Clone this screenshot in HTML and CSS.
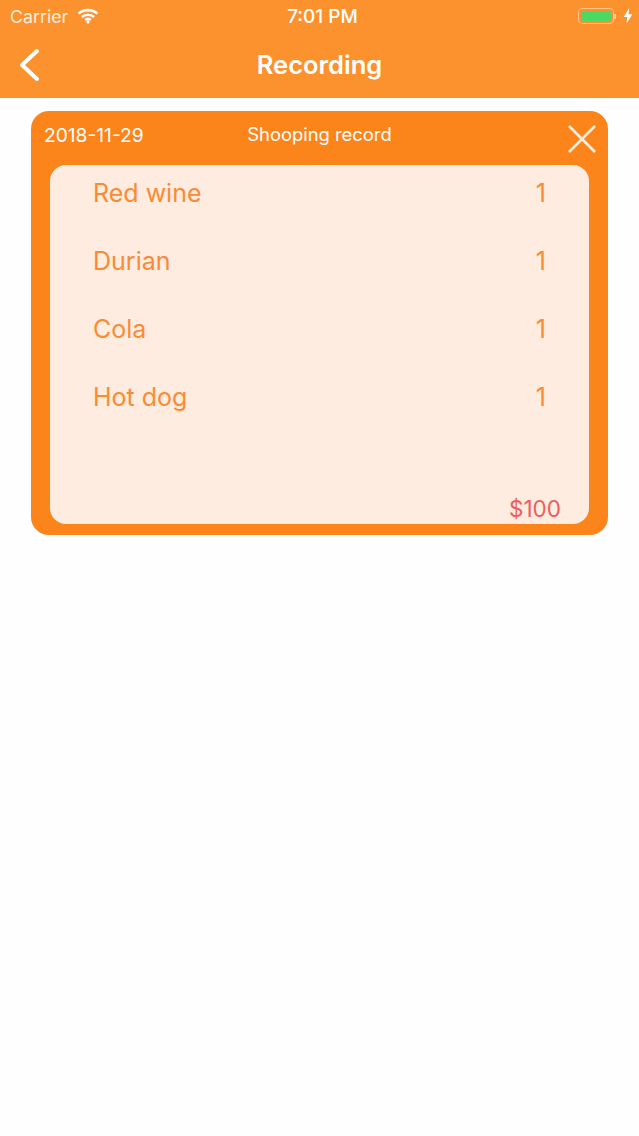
FILE: index.html
```html
<!DOCTYPE html>
<html lang="en">
<head>
    <meta charset="UTF-8">
    <meta name="viewport" content="width=device-width, initial-scale=1.0">
    <title>Recording</title>
    <link rel="stylesheet" href="styles.css">
</head>
<body>
    <header class="topbar">
        <div class="status-bar">
            <div class="status-left">
                <span>Carrier</span>
                <svg class="wifi" width="22" height="16" viewBox="0 0 22 16">
                    <path d="M1.5 5.6C6.8 .9 15.2 .9 20.5 5.6" />
                    <path d="M4.9 9C8.3 6 13.7 6 17.1 9" />
                    <path d="M8.1 12.1C9.8 10.7 12.2 10.7 13.9 12.1" />
                    <circle cx="11" cy="14" r="1.6" />
                </svg>
            </div>
            <div class="status-time">7:01 PM</div>
            <div class="status-right">
                <div class="battery"><div class="battery-level"></div></div>
                <div class="battery-tip"></div>
                <svg class="bolt" width="10" height="16" viewBox="0 0 9 15">
                    <path d="M5.6 0L0.4 8.5H3.9L3 15L8.6 5.9H5L5.6 0Z" />
                </svg>
            </div>
        </div>
        <nav class="navbar">
            <svg class="back" width="22" height="34" viewBox="0 0 22 34">
                <path d="M19 3L4 17L19 31" />
            </svg>
            <h1>Recording</h1>
        </nav>
    </header>
    <main>
        <section class="record-card">
            <div class="record-head">
                <span class="record-date">2018-11-29</span>
                <span class="record-title">Shooping record</span>
                <svg class="close" width="30" height="30" viewBox="0 0 30 30">
                    <path d="M2 2L28 28M28 2L2 28" />
                </svg>
            </div>
            <div class="record-body">
                <div class="item"><span>Red wine</span><span>1</span></div>
                <div class="item"><span>Durian</span><span>1</span></div>
                <div class="item"><span>Cola</span><span>1</span></div>
                <div class="item"><span>Hot dog</span><span>1</span></div>
                <div class="total">$100</div>
            </div>
        </section>
    </main>
</body>
</html>
```

FILE: styles.css
```css
body {
    margin: 0;
    font-family: 'Inter', 'Roboto', sans-serif;
    background-color: #fefefe;
    color: white;
}

.topbar {
    height: 98px;
    background-color: #fc922d;
}

.status-bar {
    height: 32px;
    padding: 0 6px 0 10px;
    display: flex;
    align-items: center;
    position: relative;
    font-size: 17.8px;
}

.status-left {
    display: flex;
    align-items: center;
    gap: 9px;
    color: #ffeedd;
}

.wifi path {
    fill: none;
    stroke: white;
    stroke-width: 2.6;
}

.wifi circle {
    fill: white;
}

.status-time {
    position: absolute;
    left: 6px;
    right: 0;
    text-align: center;
    font-weight: 500;
    font-size: 19px;
}

.status-right {
    margin-left: auto;
    display: flex;
    align-items: center;
}

.battery {
    width: 36px;
    height: 16px;
    padding: 2px;
    box-sizing: border-box;
    border: 1px solid #fdc48f;
    border-radius: 4px;
}

.battery-level {
    height: 100%;
    background-color: #4cd964;
    border-radius: 2px;
}

.battery-tip {
    width: 2px;
    height: 5px;
    background-color: #fdc48f;
    margin-right: 7px;
}

.bolt path {
    fill: white;
}

.navbar {
    height: 66px;
    padding-bottom: 1px;
    box-sizing: border-box;
    display: flex;
    align-items: center;
    justify-content: center;
    position: relative;
}

.navbar h1 {
    margin: 0;
    font-size: 25.5px;
    font-weight: 600;
}

.back {
    position: absolute;
    left: 18px;
    top: 16px;
}

.back path {
    fill: none;
    stroke: white;
    stroke-width: 4;
    stroke-linecap: round;
    stroke-linejoin: round;
}

main {
    padding: 13px 31px;
}

.record-card {
    height: 424px;
    background-color: #fc851b;
    border-radius: 18px;
    padding: 0 19px 11px;
    box-sizing: border-box;
    display: flex;
    flex-direction: column;
}

.record-head {
    height: 54px;
    flex-shrink: 0;
    position: relative;
}

.record-date {
    position: absolute;
    left: -6px;
    top: 12px;
    font-size: 19.2px;
}

.record-title {
    position: absolute;
    left: 0;
    right: 0;
    top: 12px;
    text-align: center;
    font-size: 18.4px;
}

.close {
    position: absolute;
    right: -8px;
    top: 13px;
}

.close path {
    fill: none;
    stroke: #ffeedd;
    stroke-width: 2.6;
}

.record-body {
    flex: 1;
    background-color: #feece0;
    border-radius: 16px;
    padding: 0 28px 0 43px;
    display: flex;
    flex-direction: column;
    gap: 12px;
    color: #f98b34;
    font-size: 25px;
}

.item {
    height: 56px;
    display: flex;
    align-items: center;
    justify-content: space-between;
    padding-right: 15px;
}

.total {
    margin-top: auto;
    height: 29px;
    text-align: right;
    font-size: 22.5px;
    color: #ec5f5f;
}
```
